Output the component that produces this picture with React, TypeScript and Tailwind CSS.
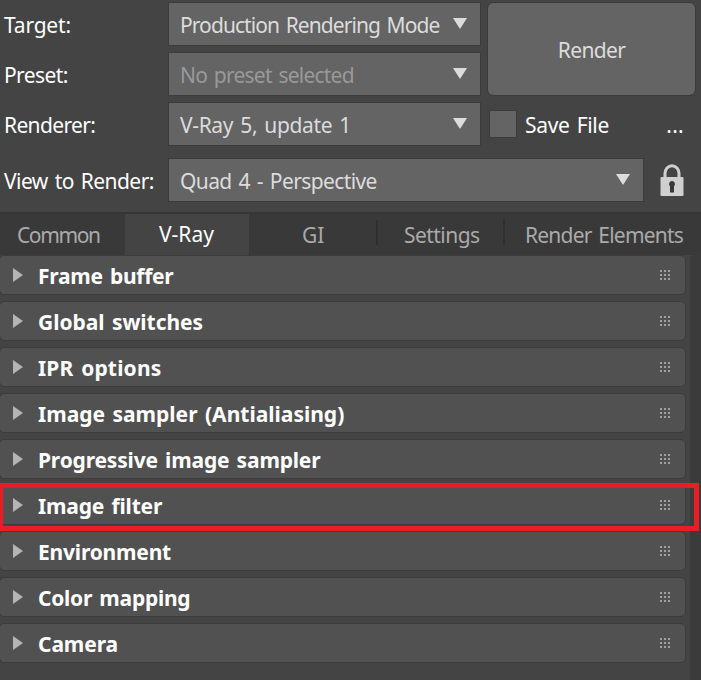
import clsx from 'clsx'

const rollouts = [
  { name: 'Frame buffer', spacing: 'tracking-[-0.27px]' },
  { name: 'Global switches', spacing: 'tracking-[-0.04px]' },
  { name: 'IPR options', spacing: 'tracking-[0.17px]' },
  { name: 'Image sampler (Antialiasing)', spacing: 'tracking-normal' },
  { name: 'Progressive image sampler', spacing: 'tracking-[-0.18px]' },
  { name: 'Image filter', spacing: 'tracking-[-0.17px]', highlighted: true },
  { name: 'Environment', spacing: 'tracking-[-0.2px]' },
  { name: 'Color mapping', spacing: 'tracking-[-0.25px]' },
  { name: 'Camera', spacing: 'tracking-[-0.1px]' },
]

const tabs = [
  { name: 'Common', className: 'w-[125px] pl-[17px] tracking-[-1.4px]' },
  { name: 'V-Ray', className: 'w-[124px] pl-[34px]', active: true },
  { name: 'GI', className: 'w-[127px] pl-[53px]' },
  { name: 'Settings', className: 'w-[127px] pl-7 tracking-[-0.55px]', divider: true },
  { name: 'Render Elements', className: 'flex-1 pl-[22px] tracking-[-0.78px]', divider: true },
]

function Dropdown({ value, className, disabled }: { value: string; className: string; disabled?: boolean }) {
  return (
    <button
      className={clsx(
        'flex h-[42px] items-center justify-between bg-[#646464] pl-[11px] pr-[13px] [word-spacing:2px] outline outline-1 outline-[#3b3b3b]',
        disabled ? 'text-[#999]' : 'text-[#dcdcdc]',
        className,
      )}
    >
      <span className="pt-0.5">{value}</span>
      <svg width="14" height="11" viewBox="0 0 14 11" className="mb-px text-[#dcdcdc]">
        <path d="M0 0h14L7 11z" fill="currentColor" />
      </svg>
    </button>
  )
}

function Grip() {
  return (
    <svg width="10" height="10" viewBox="0 0 10 10" fill="#a0a0a0" shapeRendering="crispEdges">
      {[0, 4, 8].map((y) => [0, 4, 8].map((x) => <rect key={`${x}-${y}`} x={x} y={y} width="2" height="2" />))}
    </svg>
  )
}

function LockIcon() {
  return (
    <svg width="24" height="33" viewBox="0 0 24 33">
      <path d="M5 14V9.500a7 7.800 0 0 1 14 0V14" fill="none" stroke="#cfcfcf" strokeWidth="3" />
      <rect x="0.500" y="13" width="23" height="19" rx="1" fill="#cfcfcf" />
      <path d="M12 17a3 3 0 0 1 2 5.200V28.500h-4V22.200A3 3 0 0 1 12 17z" fill="#393939" />
    </svg>
  )
}

export default function App() {
  return (
    <div className="flex h-[680px] w-[701px] flex-col overflow-hidden bg-[#444] font-['Noto_Sans',sans-serif] text-[21px] leading-none whitespace-nowrap text-white [word-spacing:2px]">
      {/* Render settings */}
      <div className="flex h-[156px] shrink-0 pt-[3px]">
        <div className="flex w-[480px] flex-col gap-2">
          <div className="flex items-center">
            <span className="w-[169px] pt-0.5 pl-1 tracking-[-0.2px]">Target:</span>
            <Dropdown value="Production Rendering Mode" className="w-[311px] tracking-[-0.92px]" />
          </div>
          <div className="flex items-center">
            <span className="w-[169px] pt-0.5 pl-1 tracking-[-0.6px]">Preset:</span>
            <Dropdown value="No preset selected" className="w-[311px] tracking-[-0.77px]" disabled />
          </div>
          <div className="flex items-center">
            <span className="w-[169px] pt-0.5 pl-1 tracking-[-0.65px]">Renderer:</span>
            <Dropdown value="V-Ray 5, update 1" className="w-[311px] tracking-[-0.35px]" />
          </div>
        </div>
        <div className="ml-2 w-[207px]">
          <button className="h-[92px] w-full rounded-[5px] bg-[#646464] pt-0.5 tracking-[-0.65px] text-[#dcdcdc] outline outline-1 outline-[#3b3b3b]">
            Render
          </button>
          <div className="mt-2 flex h-[42px] items-center pl-0.5">
            <span className="size-[26px] bg-[#646464] outline outline-1 outline-[#3b3b3b]" />
            <span className="ml-[9px] pt-0.5 tracking-[-0.32px]">Save File</span>
            <span className="mr-[11px] ml-auto pt-0.5 tracking-[0.3px]">...</span>
          </div>
        </div>
      </div>
      <div className="flex h-14 shrink-0 items-start pt-[3px]">
        <span className="w-[169px] pt-3 pl-1 tracking-[-0.55px]">View to Render:</span>
        <Dropdown value="Quad 4 - Perspective" className="w-[474px] tracking-[-0.6px]" />
        <div className="mt-[5px] ml-[17px]">
          <LockIcon />
        </div>
      </div>

      {/* Tabs */}
      <div className="flex h-[43px] shrink-0 items-start border-t-2 border-[#363636] bg-[#393939] text-[#aaa]">
        {tabs.map((tab) => (
          <div
            key={tab.name}
            className={clsx('relative flex h-[41px] items-center', tab.active ? 'bg-[#444] text-white' : 'pt-0.5', tab.className)}
          >
            {tab.divider && <span className="absolute top-1.5 left-0 h-[25px] w-0.5 bg-[#2f2f2f]" />}
            {tab.name}
          </div>
        ))}
      </div>

      {/* Rollouts */}
      <div className="flex flex-1 justify-between">
        <div className="flex w-[685px] flex-col gap-2 pt-px">
          {rollouts.map((rollout) => (
            <div
              key={rollout.name}
              className="relative flex h-[38px] items-center rounded-[4px] bg-[#515151] pl-[13px] outline outline-1 outline-[#3c3c3c]"
            >
              <svg width="10" height="14" viewBox="0 0 10 14" className="mb-px">
                <path d="M0 0v14l10-7z" fill="#b4b4b4" />
              </svg>
              <span className={clsx('ml-[15px] pt-0.5 font-bold', rollout.spacing)}>{rollout.name}</span>
              <span className="mr-[15px] mb-px ml-auto">
                <Grip />
              </span>
              {rollout.highlighted && (
                <div className="absolute -top-[3px] left-0 z-10 h-12 w-[699px] border-[5px] border-l-[3px] border-[#ec1c24]" />
              )}
            </div>
          ))}
        </div>
        <div className="w-[11px] rounded-tl-[4px] bg-[#3b3b3b]" />
      </div>
    </div>
  )
}
